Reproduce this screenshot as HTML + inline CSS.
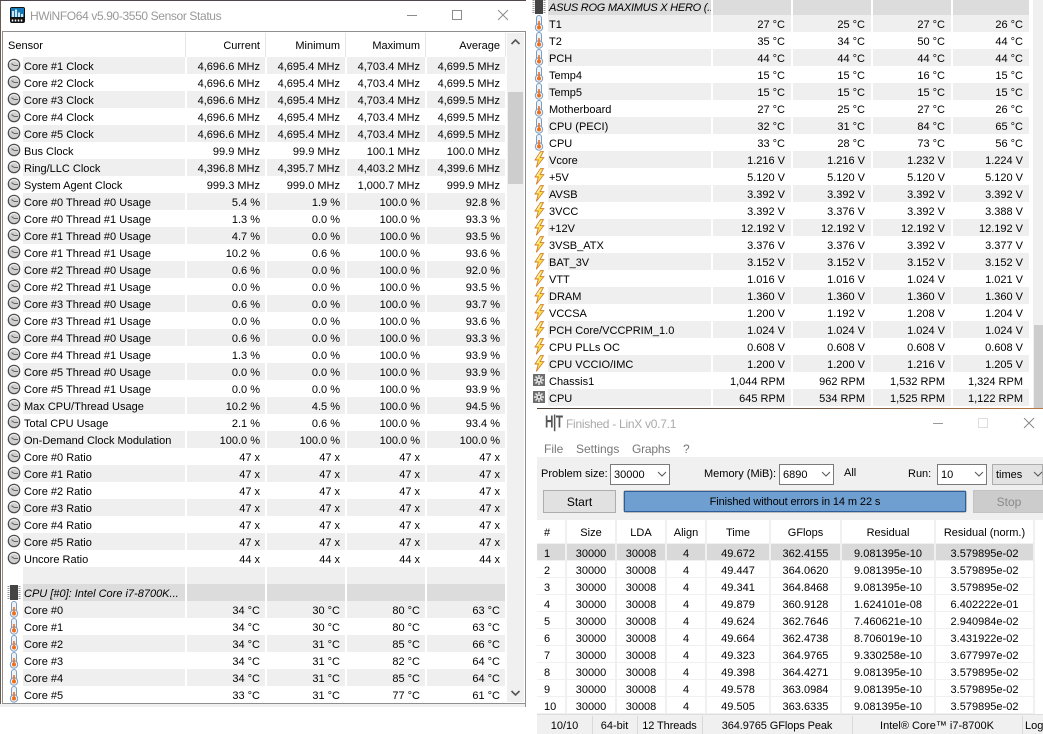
<!DOCTYPE html>
<html><head><meta charset="utf-8"><title>HWiNFO and LinX</title>
<style>
html,body{margin:0;padding:0;width:1043px;height:734px;overflow:hidden;background:#fff}
body{position:relative;font:11px/17px "Liberation Sans",sans-serif;color:#000}
.a{position:absolute;white-space:nowrap}
table{position:absolute;table-layout:fixed;border-collapse:separate;border-spacing:0}
td{padding:4px 5px 0 0;height:13px;line-height:13px;text-align:right;white-space:nowrap;overflow:hidden;border-right:2px solid #fff;background:#fff}
tr.g td{background:#efefef}
tr.h td{background:#dcdcdc}
td:first-child{background:#fff!important;border:0;padding:0;height:17px}
td:nth-child(2){text-align:left;padding:4px 0 0 1px}
.i{display:block;width:20px;height:17px;margin-left:1px}
#R .i{margin-left:-1px}
#R td{padding-right:6px}
#R td:first-child{padding:0}
#R td:nth-child(2){padding:4px 0 0 1px}
.m{font-style:italic}
.mr{font-style:italic;letter-spacing:-.25px}
.ln{background:#e6e6e6;width:1px;position:absolute}
#X td{text-align:center;padding:4px 0 0 0;height:12px;line-height:12px;border-right:2px solid #f0f0f0;border-bottom:1px solid #f0f0f0;background:#fff!important}
#X td:first-child{text-align:left;padding:4px 0 0 7px;height:12px;border-right:2px solid #f0f0f0;border-bottom:1px solid #f0f0f0}
#X tr.sel td{background:#d9d9d9!important}
#X tr.t td{height:19px;line-height:19px}
.sb{position:absolute;background:#f0f0f0}
.sel-b{position:absolute;background:#fff;border:1px solid #7a7a7a;box-sizing:border-box;line-height:20px;padding-left:3px;color:#000;font-size:11px}
.stat{position:absolute;top:717px;height:18px;line-height:18px;text-align:center;color:#000}
.sep{position:absolute;top:716px;height:18px;width:1px;background:#d9d9d9}
.menu{color:#777;font-size:12px;line-height:16px;top:441px}
</style></head><body>
<svg width="0" height="0" style="position:absolute">
<symbol id="c" viewBox="0 0 20 17"><circle cx="10" cy="8" r="5.7" fill="#cfcfcf" stroke="#4a4a4a" stroke-width="1.2"/><path d="M5.5 6.5A5 5 0 0 1 14.5 6.5" fill="none" stroke="#f4f4f4" stroke-width="1"/><path d="M10 8.4H14M10 8.4L7.5 6.6" stroke="#555" stroke-width=".9" fill="none"/></symbol>
<symbol id="t" viewBox="0 0 20 17"><rect x="7.5" y="0.5" width="5" height="11" rx="2.5" fill="#eef3f9" stroke="#7a9cc2"/><circle cx="10" cy="12.5" r="3.7" fill="#eef3f9" stroke="#7a9cc2"/><rect x="9.2" y="6" width="1.6" height="6" fill="#f0701a"/><circle cx="10" cy="12.5" r="2" fill="#f0701a"/></symbol>
<symbol id="b" viewBox="0 0 20 17"><path d="M11.5 .6L6 9H9.3L7.3 16.4L14.8 6.6H11.2L14.4 .6Z" fill="#ffe04a" stroke="#d08030" stroke-width=".9"/><path d="M11.6 2.2L8 8" fill="none" stroke="#fff8c8" stroke-width="1"/></symbol>
<symbol id="f" viewBox="0 0 20 17"><rect x="4" y="2" width="12" height="12" fill="#6e6e6e"/><path d="M10 3V13M5 8H15M6.5 4.5L13.5 11.5M13.5 4.5L6.5 11.5" stroke="#e8e8e8" stroke-width="1.5"/><circle cx="10" cy="8" r="1.2" fill="#555"/></symbol>
<symbol id="p" viewBox="0 0 20 17"><rect x="6" y="1" width="8" height="15" fill="#444"/><path d="M4.5 2V15M15.5 2V15" stroke="#999" stroke-width="2" stroke-dasharray="1 1"/></symbol>
</svg>

<!-- left window -->
<div class="a" style="left:0;top:0;width:526px;height:1px;background:#50464e"></div>
<div class="a" style="left:0;top:1px;width:1px;height:706px;background:#6b5a50"></div>
<svg class="a" style="left:10px;top:7px" width="15" height="16" viewBox="0 0 15 16"><rect width="15" height="16" rx="2" fill="#111"/><rect x="1" y="1" width="13" height="9" fill="#1579b8"/><path d="M3 4V10M6 2.5V10M9 5.5V10M12 7V10" stroke="#fff" stroke-width="1.6"/><path d="M2.5 12.5V14.5M5.5 12.5V14.5M8.5 12.5V14.5M11.5 12.5V14.5" stroke="#fff" stroke-width="1.5"/></svg>
<div class="a" style="left:30px;top:7px;font-size:12px;letter-spacing:-.37px;line-height:18px;color:#999">HWiNFO64 v5.90-3550 Sensor Status</div>
<svg class="a" style="left:400px;top:5px" width="115" height="22" fill="none" stroke="#8c8c8c"><path d="M7 10.5H17"/><rect x="52.5" y="5.5" width="9" height="9"/><path d="M98 5L108 15M108 5L98 15"/></svg>
<div class="a" style="left:2px;top:31px;width:524px;height:1px;background:#8f8f8f"></div>
<div class="a" style="left:2px;top:31px;width:1px;height:673px;background:#8f8f8f"></div>
<div class="a" style="left:525px;top:31px;width:1px;height:676px;background:#8f8f8f"></div>
<div class="a" style="left:2px;top:703px;width:524px;height:1px;background:#8f8f8f"></div>
<div class="a" style="left:0;top:704px;width:525px;height:3px;background:#f0f0f0"></div>
<div class="a" style="left:8px;top:38px">Sensor</div>
<div class="a" style="left:185px;top:38px;width:75px;text-align:right">Current</div>
<div class="a" style="left:265px;top:38px;width:75px;text-align:right">Minimum</div>
<div class="a" style="left:345px;top:38px;width:75px;text-align:right">Maximum</div>
<div class="a" style="left:425px;top:38px;width:75px;text-align:right">Average</div>
<div class="ln" style="left:185px;top:33px;height:24px"></div><div class="ln" style="left:265px;top:33px;height:24px"></div><div class="ln" style="left:345px;top:33px;height:24px"></div><div class="ln" style="left:425px;top:33px;height:24px"></div><div class="ln" style="left:505px;top:33px;height:24px"></div>

<table id="L" style="left:3px;top:57px;width:504px">
<colgroup><col style="width:20px"><col style="width:164px"><col style="width:80px"><col style="width:80px"><col style="width:80px"><col style="width:80px"></colgroup>
<tr class="g"><td><svg class="i"><use href="#c"/></svg><td>Core #1 Clock<td>4,696.6 MHz<td>4,695.4 MHz<td>4,703.4 MHz<td>4,699.5 MHz
<tr><td><svg class="i"><use href="#c"/></svg><td>Core #2 Clock<td>4,696.6 MHz<td>4,695.4 MHz<td>4,703.4 MHz<td>4,699.5 MHz
<tr class="g"><td><svg class="i"><use href="#c"/></svg><td>Core #3 Clock<td>4,696.6 MHz<td>4,695.4 MHz<td>4,703.4 MHz<td>4,699.5 MHz
<tr><td><svg class="i"><use href="#c"/></svg><td>Core #4 Clock<td>4,696.6 MHz<td>4,695.4 MHz<td>4,703.4 MHz<td>4,699.5 MHz
<tr class="g"><td><svg class="i"><use href="#c"/></svg><td>Core #5 Clock<td>4,696.6 MHz<td>4,695.4 MHz<td>4,703.4 MHz<td>4,699.5 MHz
<tr><td><svg class="i"><use href="#c"/></svg><td>Bus Clock<td>99.9 MHz<td>99.9 MHz<td>100.1 MHz<td>100.0 MHz
<tr class="g"><td><svg class="i"><use href="#c"/></svg><td>Ring/LLC Clock<td>4,396.8 MHz<td>4,395.7 MHz<td>4,403.2 MHz<td>4,399.6 MHz
<tr><td><svg class="i"><use href="#c"/></svg><td>System Agent Clock<td>999.3 MHz<td>999.0 MHz<td>1,000.7 MHz<td>999.9 MHz
<tr class="g"><td><svg class="i"><use href="#c"/></svg><td>Core #0 Thread #0 Usage<td>5.4 %<td>1.9 %<td>100.0 %<td>92.8 %
<tr><td><svg class="i"><use href="#c"/></svg><td>Core #0 Thread #1 Usage<td>1.3 %<td>0.0 %<td>100.0 %<td>93.3 %
<tr class="g"><td><svg class="i"><use href="#c"/></svg><td>Core #1 Thread #0 Usage<td>4.7 %<td>0.0 %<td>100.0 %<td>93.5 %
<tr><td><svg class="i"><use href="#c"/></svg><td>Core #1 Thread #1 Usage<td>10.2 %<td>0.6 %<td>100.0 %<td>93.6 %
<tr class="g"><td><svg class="i"><use href="#c"/></svg><td>Core #2 Thread #0 Usage<td>0.6 %<td>0.0 %<td>100.0 %<td>92.0 %
<tr><td><svg class="i"><use href="#c"/></svg><td>Core #2 Thread #1 Usage<td>0.0 %<td>0.0 %<td>100.0 %<td>93.5 %
<tr class="g"><td><svg class="i"><use href="#c"/></svg><td>Core #3 Thread #0 Usage<td>0.6 %<td>0.0 %<td>100.0 %<td>93.7 %
<tr><td><svg class="i"><use href="#c"/></svg><td>Core #3 Thread #1 Usage<td>0.0 %<td>0.0 %<td>100.0 %<td>93.6 %
<tr class="g"><td><svg class="i"><use href="#c"/></svg><td>Core #4 Thread #0 Usage<td>0.6 %<td>0.0 %<td>100.0 %<td>93.3 %
<tr><td><svg class="i"><use href="#c"/></svg><td>Core #4 Thread #1 Usage<td>1.3 %<td>0.0 %<td>100.0 %<td>93.9 %
<tr class="g"><td><svg class="i"><use href="#c"/></svg><td>Core #5 Thread #0 Usage<td>0.0 %<td>0.0 %<td>100.0 %<td>93.9 %
<tr><td><svg class="i"><use href="#c"/></svg><td>Core #5 Thread #1 Usage<td>0.0 %<td>0.0 %<td>100.0 %<td>93.9 %
<tr class="g"><td><svg class="i"><use href="#c"/></svg><td>Max CPU/Thread Usage<td>10.2 %<td>4.5 %<td>100.0 %<td>94.5 %
<tr><td><svg class="i"><use href="#c"/></svg><td>Total CPU Usage<td>2.1 %<td>0.6 %<td>100.0 %<td>93.4 %
<tr class="g"><td><svg class="i"><use href="#c"/></svg><td>On-Demand Clock Modulation<td>100.0 %<td>100.0 %<td>100.0 %<td>100.0 %
<tr><td><svg class="i"><use href="#c"/></svg><td>Core #0 Ratio<td>47 x<td>47 x<td>47 x<td>47 x
<tr class="g"><td><svg class="i"><use href="#c"/></svg><td>Core #1 Ratio<td>47 x<td>47 x<td>47 x<td>47 x
<tr><td><svg class="i"><use href="#c"/></svg><td>Core #2 Ratio<td>47 x<td>47 x<td>47 x<td>47 x
<tr class="g"><td><svg class="i"><use href="#c"/></svg><td>Core #3 Ratio<td>47 x<td>47 x<td>47 x<td>47 x
<tr><td><svg class="i"><use href="#c"/></svg><td>Core #4 Ratio<td>47 x<td>47 x<td>47 x<td>47 x
<tr class="g"><td><svg class="i"><use href="#c"/></svg><td>Core #5 Ratio<td>47 x<td>47 x<td>47 x<td>47 x
<tr><td><svg class="i"><use href="#c"/></svg><td>Uncore Ratio<td>44 x<td>44 x<td>44 x<td>44 x
<tr class="g"><td><td><td><td><td><td>
<tr class="h"><td><svg class="i"><use href="#p"/></svg><td class="m">CPU [#0]: Intel Core i7-8700K...<td><td><td><td>
<tr class="g"><td><svg class="i"><use href="#t"/></svg><td>Core #0<td>34 °C<td>30 °C<td>80 °C<td>63 °C
<tr><td><svg class="i"><use href="#t"/></svg><td>Core #1<td>34 °C<td>30 °C<td>80 °C<td>63 °C
<tr class="g"><td><svg class="i"><use href="#t"/></svg><td>Core #2<td>34 °C<td>31 °C<td>85 °C<td>66 °C
<tr><td><svg class="i"><use href="#t"/></svg><td>Core #3<td>34 °C<td>31 °C<td>82 °C<td>64 °C
<tr class="g"><td><svg class="i"><use href="#t"/></svg><td>Core #4<td>34 °C<td>31 °C<td>85 °C<td>64 °C
<tr><td><svg class="i"><use href="#t"/></svg><td>Core #5<td>33 °C<td>31 °C<td>77 °C<td>61 °C
</table>
<div class="sb" style="left:507px;top:33px;width:17px;height:669px"></div>
<div class="a" style="left:508px;top:92px;width:15px;height:92px;background:#cdcdcd"></div>
<svg class="a" style="left:510px;top:38px" width="11" height="8" fill="none" stroke="#555" stroke-width="1.6"><path d="M1.5 6L5.5 2L9.5 6"/></svg>
<svg class="a" style="left:510px;top:689px" width="11" height="8" fill="none" stroke="#555" stroke-width="1.6"><path d="M1.5 2L5.5 6L9.5 2"/></svg>

<!-- right panel -->
<table id="R" style="left:530px;top:-2px;width:501px">
<colgroup><col style="width:18px"><col style="width:165px"><col style="width:80px"><col style="width:80px"><col style="width:80px"><col style="width:78px"></colgroup>
<tr class="h"><td><svg class="i"><use href="#p"/></svg><td class="mr">ASUS ROG MAXIMUS X HERO (...<td><td><td><td>
<tr class="g"><td><svg class="i"><use href="#t"/></svg><td>T1<td>27 °C<td>25 °C<td>27 °C<td>26 °C
<tr><td><svg class="i"><use href="#t"/></svg><td>T2<td>35 °C<td>34 °C<td>50 °C<td>44 °C
<tr class="g"><td><svg class="i"><use href="#t"/></svg><td>PCH<td>44 °C<td>44 °C<td>44 °C<td>44 °C
<tr><td><svg class="i"><use href="#t"/></svg><td>Temp4<td>15 °C<td>15 °C<td>16 °C<td>15 °C
<tr class="g"><td><svg class="i"><use href="#t"/></svg><td>Temp5<td>15 °C<td>15 °C<td>15 °C<td>15 °C
<tr><td><svg class="i"><use href="#t"/></svg><td>Motherboard<td>27 °C<td>25 °C<td>27 °C<td>26 °C
<tr class="g"><td><svg class="i"><use href="#t"/></svg><td>CPU (PECI)<td>32 °C<td>31 °C<td>84 °C<td>65 °C
<tr><td><svg class="i"><use href="#t"/></svg><td>CPU<td>33 °C<td>28 °C<td>73 °C<td>56 °C
<tr class="g"><td><svg class="i"><use href="#b"/></svg><td>Vcore<td>1.216 V<td>1.216 V<td>1.232 V<td>1.224 V
<tr><td><svg class="i"><use href="#b"/></svg><td>+5V<td>5.120 V<td>5.120 V<td>5.120 V<td>5.120 V
<tr class="g"><td><svg class="i"><use href="#b"/></svg><td>AVSB<td>3.392 V<td>3.392 V<td>3.392 V<td>3.392 V
<tr><td><svg class="i"><use href="#b"/></svg><td>3VCC<td>3.392 V<td>3.376 V<td>3.392 V<td>3.388 V
<tr class="g"><td><svg class="i"><use href="#b"/></svg><td>+12V<td>12.192 V<td>12.192 V<td>12.192 V<td>12.192 V
<tr><td><svg class="i"><use href="#b"/></svg><td>3VSB_ATX<td>3.376 V<td>3.376 V<td>3.392 V<td>3.377 V
<tr class="g"><td><svg class="i"><use href="#b"/></svg><td>BAT_3V<td>3.152 V<td>3.152 V<td>3.152 V<td>3.152 V
<tr><td><svg class="i"><use href="#b"/></svg><td>VTT<td>1.016 V<td>1.016 V<td>1.024 V<td>1.021 V
<tr class="g"><td><svg class="i"><use href="#b"/></svg><td>DRAM<td>1.360 V<td>1.360 V<td>1.360 V<td>1.360 V
<tr><td><svg class="i"><use href="#b"/></svg><td>VCCSA<td>1.200 V<td>1.192 V<td>1.208 V<td>1.204 V
<tr class="g"><td><svg class="i"><use href="#b"/></svg><td>PCH Core/VCCPRIM_1.0<td>1.024 V<td>1.024 V<td>1.024 V<td>1.024 V
<tr><td><svg class="i"><use href="#b"/></svg><td>CPU PLLs OC<td>0.608 V<td>0.608 V<td>0.608 V<td>0.608 V
<tr class="g"><td><svg class="i"><use href="#b"/></svg><td>CPU VCCIO/IMC<td>1.200 V<td>1.200 V<td>1.216 V<td>1.205 V
<tr><td><svg class="i"><use href="#f"/></svg><td>Chassis1<td>1,044 RPM<td>962 RPM<td>1,532 RPM<td>1,324 RPM
<tr class="g"><td><svg class="i"><use href="#f"/></svg><td>CPU<td>645 RPM<td>534 RPM<td>1,525 RPM<td>1,122 RPM
</table>
<div class="sb" style="left:1033px;top:0;width:10px;height:408px"></div>
<div class="a" style="left:1034px;top:325px;width:9px;height:83px;background:#cdcdcd"></div>

<!-- LinX window -->
<div class="a" style="left:537px;top:408px;width:506px;height:326px;background:#fff"></div>
<div class="a" style="left:537px;top:408px;width:506px;height:1px;background:linear-gradient(90deg,#4a4038,#6a5545 50%,#b87a45)"></div>
<div class="a" style="left:543px;top:414px;width:18px;height:18px;font:bold 15px/18px 'Liberation Sans',sans-serif;color:#555;transform:scale(.78,1.15);letter-spacing:-.5px">H|T</div>
<div class="a" style="left:566px;top:415px;font-size:12px;letter-spacing:-.27px;line-height:18px;color:#aaa">Finished - LinX v0.7.1</div>
<svg class="a" style="left:925px;top:410px" width="118" height="26" fill="none"><path d="M8 13.5H18" stroke="#999"/><rect x="53.5" y="8.5" width="9" height="9" stroke="#ddd"/><path d="M99 8L109 18M109 8L99 18" stroke="#888"/></svg>
<div class="a menu" style="left:544px">File</div>
<div class="a menu" style="left:576px">Settings</div>
<div class="a menu" style="left:632px;letter-spacing:-.2px">Graphs</div>
<div class="a menu" style="left:683px">?</div>

<div class="a" style="left:537px;top:457px;width:506px;height:63px;background:#f0f0f0"></div>
<div class="a" style="left:541px;top:466px">Problem size:</div>
<div class="sel-b" style="left:610px;top:464px;width:60px;height:21px">30000</div>
<svg class="a" style="left:657px;top:471px" width="10" height="7" fill="none" stroke="#555"><path d="M1 1L5 5L9 1"/></svg>
<div class="a" style="left:704px;top:466px">Memory (MiB):</div>
<div class="sel-b" style="left:779px;top:464px;width:55px;height:21px">6890</div>
<svg class="a" style="left:821px;top:471px" width="10" height="7" fill="none" stroke="#555"><path d="M1 1L5 5L9 1"/></svg>
<div class="a" style="left:844px;top:465px">All</div>
<div class="a" style="left:908px;top:466px">Run:</div>
<div class="sel-b" style="left:937px;top:464px;width:50px;height:21px">10</div>
<svg class="a" style="left:974px;top:471px" width="10" height="7" fill="none" stroke="#555"><path d="M1 1L5 5L9 1"/></svg>
<div class="sel-b" style="left:992px;top:464px;width:51px;height:21px;background:#e3e3e3;border-color:#adadad">times</div>
<svg class="a" style="left:1033px;top:471px" width="10" height="7" fill="none" stroke="#555"><path d="M1 1L5 5L9 1"/></svg>

<div class="a" style="left:543px;top:490px;width:73px;height:23px;box-sizing:border-box;background:#e1e1e1;border:1px solid #adadad;text-align:center;line-height:23px;font-size:12px">Start</div>
<div class="a" style="left:623px;top:490px;width:344px;height:23px;box-sizing:border-box;border:1px solid #bcbcbc;border-radius:3px;background:#e6e6e6"></div>
<div class="a" style="left:624px;top:491px;width:342px;height:21px;box-sizing:border-box;border:1px solid #2f5d9a;background:#6f9fd0;text-align:center;line-height:21px;font-size:11px;letter-spacing:-.1px">Finished without errors in 14 m 22 s</div>
<div class="a" style="left:973px;top:490px;width:72px;height:23px;box-sizing:border-box;background:#cccccc;border:1px solid #c4c4c4;text-align:center;line-height:23px;font-size:12px;color:#8a8a8a">Stop</div>

<table id="X" style="left:537px;top:520px;width:498px">
<colgroup><col style="width:30px"><col style="width:50px"><col style="width:50px"><col style="width:40px"><col style="width:64px"><col style="width:71px"><col style="width:94px"><col style="width:99px"></colgroup>
<tr class="t"><td>#<td>Size<td>LDA<td>Align<td>Time<td>GFlops<td>Residual<td>Residual (norm.)
<tr class="sel"><td>1<td>30000<td>30008<td>4<td>49.672<td>362.4155<td>9.081395e-10<td>3.579895e-02
<tr><td>2<td>30000<td>30008<td>4<td>49.447<td>364.0620<td>9.081395e-10<td>3.579895e-02
<tr><td>3<td>30000<td>30008<td>4<td>49.341<td>364.8468<td>9.081395e-10<td>3.579895e-02
<tr><td>4<td>30000<td>30008<td>4<td>49.879<td>360.9128<td>1.624101e-08<td>6.402222e-01
<tr><td>5<td>30000<td>30008<td>4<td>49.624<td>362.7646<td>7.460621e-10<td>2.940984e-02
<tr><td>6<td>30000<td>30008<td>4<td>49.664<td>362.4738<td>8.706019e-10<td>3.431922e-02
<tr><td>7<td>30000<td>30008<td>4<td>49.323<td>364.9765<td>9.330258e-10<td>3.677997e-02
<tr><td>8<td>30000<td>30008<td>4<td>49.398<td>364.4271<td>9.081395e-10<td>3.579895e-02
<tr><td>9<td>30000<td>30008<td>4<td>49.578<td>363.0984<td>9.081395e-10<td>3.579895e-02
<tr><td>10<td>30000<td>30008<td>4<td>49.505<td>363.6335<td>9.081395e-10<td>3.579895e-02
</table>

<div class="a" style="left:537px;top:714px;width:506px;height:20px;background:#f0f0f0;border-top:1px solid #dedede;box-sizing:border-box"></div>
<div class="stat" style="left:537px;width:55px">10/10</div><div class="sep" style="left:592px"></div>
<div class="stat" style="left:592px;width:45px">64-bit</div><div class="sep" style="left:637px"></div>
<div class="stat" style="left:637px;width:65px;letter-spacing:-.1px">12 Threads</div><div class="sep" style="left:702px"></div>
<div class="stat" style="left:702px;width:150px;letter-spacing:-.1px">364.9765 GFlops Peak</div><div class="sep" style="left:852px"></div>
<div class="stat" style="left:852px;width:170px">Intel® Core™ i7-8700K</div><div class="sep" style="left:1022px"></div>
<div class="stat" style="left:1025px;width:18px;text-align:left;overflow:hidden">Log</div>
</body></html>
